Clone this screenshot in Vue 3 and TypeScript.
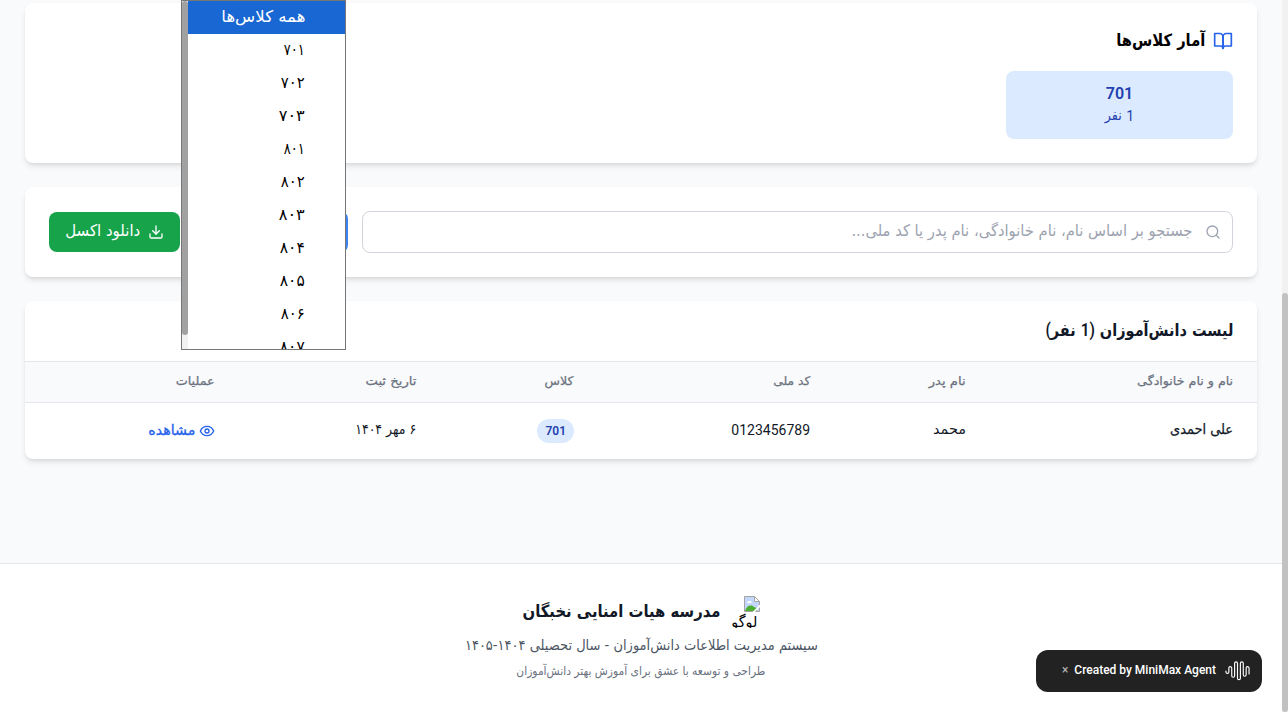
<script setup lang="ts">
import { nextTick } from 'vue'
import type { Directive } from 'vue'

interface ClassOption { label: string; width: number }
interface Column { title: string; width: number; key: string }

const options: ClassOption[] = [
  { label: 'همه کلاس‌ها', width: 84 },
  { label: '۷۰۱', width: 21 },
  { label: '۷۰۲', width: 24 },
  { label: '۷۰۳', width: 26 },
  { label: '۸۰۱', width: 21 },
  { label: '۸۰۲', width: 24 },
  { label: '۸۰۳', width: 26 },
  { label: '۸۰۴', width: 25 },
  { label: '۸۰۵', width: 25 },
  { label: '۸۰۶', width: 24 },
  { label: '۸۰۷', width: 25 },
]

const columns: Column[] = [
  { key: 'name', title: 'نام و نام خانوادگی', width: 96 },
  { key: 'father', title: 'نام پدر', width: 37 },
  { key: 'code', title: 'کد ملی', width: 37 },
  { key: 'class', title: 'کلاس', width: 29 },
  { key: 'date', title: 'تاریخ ثبت', width: 51 },
  { key: 'actions', title: 'عملیات', width: 39 },
]

// Condenses or widens a run of text so that it takes the given width.
const vFit: Directive<HTMLElement, number> = {
  mounted(el, binding) {
    nextTick(() => {
      const natural = el.getBoundingClientRect().width
      if (!natural) return
      el.style.transform = `scaleX(${binding.value / natural})`
      el.style.marginLeft = `${binding.value - natural}px`
    })
  },
}
</script>

<template>
  <div class="page" dir="rtl">
    <main class="content">
      <section class="card stats">
        <h3 class="stats-title">
          <svg class="icon book" viewBox="0 0 24 24"><path d="M2 3h6a4 4 0 0 1 4 4v14a3 3 0 0 0-3-3H2z" /><path d="M22 3h-6a4 4 0 0 0-4 4v14a3 3 0 0 1 3-3h7z" /></svg>
          <span v-fit="89" class="fa">آمار کلاس‌ها</span>
        </h3>
        <div class="stats-grid">
          <div class="stat">
            <div class="stat-name">701</div>
            <div class="stat-count">1 <span v-fit="17" class="fa">نفر</span></div>
          </div>
        </div>
      </section>

      <section class="card toolbar">
        <div class="search">
          <svg class="icon" viewBox="0 0 24 24"><circle cx="11" cy="11" r="8" /><path d="m21 21-4.35-4.35" /></svg>
          <span v-fit="341" class="fa">جستجو بر اساس نام، نام خانوادگی، نام پدر یا کد ملی...</span>
        </div>
        <div class="select">
          <ul class="menu">
            <li v-for="(o, i) in options" :key="o.label" :class="{ active: i === 0 }">
              <span v-fit="o.width" class="fa">{{ o.label }}</span>
            </li>
          </ul>
        </div>
        <button class="download">
          <svg class="icon" viewBox="0 0 24 24"><path d="M21 15v4a2 2 0 0 1-2 2H5a2 2 0 0 1-2-2v-4" /><path d="m7 10 5 5 5-5" /><path d="M12 15V3" /></svg>
          <span v-fit="75" class="fa">دانلود اکسل</span>
        </button>
      </section>

      <section class="card list">
        <h3 class="list-title"><span v-fit="188" class="fa">لیست دانش‌آموزان <span class="latin">(1</span> نفر<span class="latin">)</span></span></h3>
        <div class="row head">
          <div v-for="c in columns" :key="c.key" class="cell"><span v-fit="c.width" class="fa">{{ c.title }}</span></div>
        </div>
        <div class="row body">
          <div class="cell strong"><span v-fit="63" class="fa">علی احمدی</span></div>
          <div class="cell"><span v-fit="33" class="fa">محمد</span></div>
          <div class="cell code">0123456789</div>
          <div class="cell"><span class="pill">701</span></div>
          <div class="cell date"><span v-fit="61" class="fa">۶ مهر ۱۴۰۴</span></div>
          <div class="cell view">
            <svg class="icon" viewBox="0 0 24 24"><path d="M2 12s3-7 10-7 10 7 10 7-3 7-10 7-10-7-10-7Z" /><circle cx="12" cy="12" r="3" /></svg>
            <span v-fit="47" class="fa">مشاهده</span>
          </div>
        </div>
      </section>
    </main>

    <footer class="footer">
      <div class="brand">
        <div class="logo">
          <svg viewBox="0 0 16 16"><path d="M.5.5h10l5 5v10H.5z" fill="#fff" /><path d="M1 1h9v5h5v9H1z" fill="#c3d6fb" /><path d="M3 7c0-2 1.500-2 2-1.500C6 4 8 5 7.500 7z" fill="#fff" /><path d="M1 15c1-5 6-7 9-4l3 1v3z" fill="#4caf32" /><path d="M.5 15.500V.5h10l5 5v10z" fill="none" stroke="#a3a3a3" /><path d="M10.500.5v5h5" fill="none" stroke="#a3a3a3" /><path d="M8.500 16 16 8.500v2.500l-5 5z" fill="#fff" /></svg>
          <span v-fit="26" class="fa">لوگو</span>
        </div>
        <h2><span v-fit="198" class="fa">مدرسه هیات امنایی نخبگان</span></h2>
      </div>
      <p class="subtitle"><span v-fit="353" class="fa">سیستم مدیریت اطلاعات دانش‌آموزان - سال تحصیلی ۱۴۰۴-۱۴۰۵</span></p>
      <p class="credit"><span v-fit="249" class="fa">طراحی و توسعه با عشق برای آموزش بهتر دانش‌آموزان</span></p>
    </footer>

    <div class="scrollbar"><div class="thumb"></div></div>

    <div class="agent">
      <svg viewBox="0 0 26 22"><path d="M1 11v1a1.500 1.500 0 0 0 3 0V8a1.500 1.500 0 0 1 3 0v8a1.500 1.500 0 0 0 3 0V3a1.500 1.500 0 0 1 3 0v12M13 15v3.500a1.500 1.500 0 0 0 3 0V3a1.500 1.500 0 0 1 3 0v12a1.500 1.500 0 0 0 3 0V8a1.500 1.500 0 0 1 3 0v6" /></svg>
      <span>Created by MiniMax Agent</span>
      <span class="close">×</span>
    </div>
  </div>
</template>

<style>
body { margin: 0; overflow: hidden; }
</style>

<style scoped>
* { box-sizing: border-box; }
h2, h3, p, ul { margin: 0; padding: 0; font-weight: 400; }
.page { position: relative; width: 1288px; height: 712px; overflow: hidden; background: #f9fafb; color: #111827; font-family: Roboto, "DejaVu Sans", sans-serif; font-size: 16px; line-height: 24px; padding-right: 6px; }
.fa { display: inline-block; white-space: nowrap; transform-origin: right center; translate: 0 -1px; font-family: "DejaVu Sans", sans-serif; font-size: 1em; }
.latin { font-family: Roboto, sans-serif; font-size: 1.06em; }
.icon { width: 16px; height: 16px; fill: none; stroke: currentColor; stroke-width: 2; stroke-linecap: round; stroke-linejoin: round; flex: none; }
.content { height: 563px; padding: 3px 25px 0; display: flex; flex-direction: column; gap: 24px; }
.card { background: #fff; border-radius: 8px; box-shadow: 0 4px 6px -1px rgba(0,0,0,.1), 0 2px 4px -2px rgba(0,0,0,.1); flex: none; }
.stats { height: 160px; padding: 24px; }
.stats-title { display: flex; align-items: center; gap: 8px; height: 28px; margin-bottom: 16px; font-size: 18px; line-height: 28px; font-weight: 600; color: #000; }
.stats-title .fa, .list-title .fa, .brand h2 .fa { font-size: .94em; }
.book { width: 20px; height: 20px; color: #2563eb; }
.stats-grid { display: flex; }
.stat { width: 227px; height: 68px; padding: 12px; border-radius: 8px; background: #dbeafe; color: #1e40af; text-align: center; line-height: 22px; }
.stat-name { font-weight: 600; }
.stat-count { font-size: 14px; line-height: 22px; word-spacing: 1px; }
.toolbar { height: 90px; padding: 24px; display: flex; align-items: center; gap: 16px; }
.search { flex: 1; height: 42px; display: flex; align-items: center; gap: 13px; padding: 0 11px; border: 1px solid #d1d5db; border-radius: 8px; color: #9ca3af; }
.select { position: relative; width: 150px; height: 40px; border-radius: 7px; box-shadow: 0 0 0 2px #3b82f6; }
.menu { position: absolute; z-index: 3; right: 0; top: -212px; width: 165px; height: 350px; overflow: hidden; list-style: none; background: #fff; border: 1px solid #767676; color: #000; padding-left: 6px; }
.menu::before { content: ""; position: absolute; left: 0; top: 0; width: 6px; height: 348px; background: #f1f1f1; }
.menu::after { content: ""; position: absolute; left: 0; top: 0; width: 6px; height: 334px; background: #a1a1a1; border-radius: 3px; }
.menu li { height: 33px; line-height: 33px; padding-right: 40px; }
.menu li.active { background: #1967d2; color: #fff; }
.download { width: 131px; height: 40px; border: 0; border-radius: 8px; background: #16a34a; color: #fff; display: flex; align-items: center; gap: 8px; padding: 0 16px; font: inherit; }
.list { height: 158px; overflow: hidden; }
.list-title { height: 60px; padding: 16px 24px; font-size: 18px; line-height: 28px; font-weight: 600; }
.row { display: grid; grid-template-columns: 267px 156px 236px 158px 201px 214px; }
.cell { padding: 0 24px; white-space: nowrap; }
.head { height: 42px; border: solid #e5e7eb; border-width: 1px 0; background: #f9fafb; color: #6b7280; font-size: 12px; line-height: 40px; font-weight: 500; }
.body { height: 56px; font-size: 14px; line-height: 54px; }
.head .fa, .strong .fa { -webkit-text-stroke: .25px currentColor; }
.strong, .view { font-weight: 500; }
.view .fa { -webkit-text-stroke: .3px currentColor; }
.view { display: flex; align-items: center; gap: 4px; height: 56px; color: #2563eb; }
.pill { display: inline-block; padding: 0 8px; border-radius: 12px; height: 24px; line-height: 24px; background: #dbeafe; color: #1e40af; font-size: 12px; font-weight: 600; }
.footer { height: 149px; padding-top: 32px; border-top: 1px solid #e5e7eb; background: #fff; display: flex; flex-direction: column; align-items: center; gap: 8px; }
.brand { display: flex; align-items: center; gap: 8px; height: 32px; }
.brand h2 { font-size: 18px; line-height: 28px; font-weight: 700; }
.logo { width: 32px; height: 32px; overflow: hidden; color: #000; display: flex; flex-direction: column; align-items: flex-start; line-height: 19px; }
.logo svg { width: 16px; height: 16px; flex: none; }
.logo .fa { margin-right: 3px; font-size: .94em; translate: 0 1px; }
.subtitle { font-size: 14px; line-height: 20px; color: #4b5563; }
.credit { font-size: 12px; line-height: 16px; color: #6b7280; }
.scrollbar { position: absolute; right: 0; top: 0; width: 6px; height: 712px; background: #f1f1f1; padding-top: 293px; }
.thumb { height: 419px; background: #c1c1c1; border-radius: 3px; }
.agent { position: absolute; z-index: 4; left: 1036px; top: 650px; width: 226px; height: 42px; border-radius: 12px; background: #222; color: #fff; display: flex; align-items: center; gap: 9px; padding-right: 12px; font-size: 12px; font-weight: 500; line-height: 40px; }
.agent span { height: 42px; }
.agent svg { width: 25px; height: 22px; fill: none; stroke: #fff; stroke-width: 1.2; stroke-linecap: round; }
.close { color: #bbb; font-weight: 400; margin-right: -3px; }
</style>
